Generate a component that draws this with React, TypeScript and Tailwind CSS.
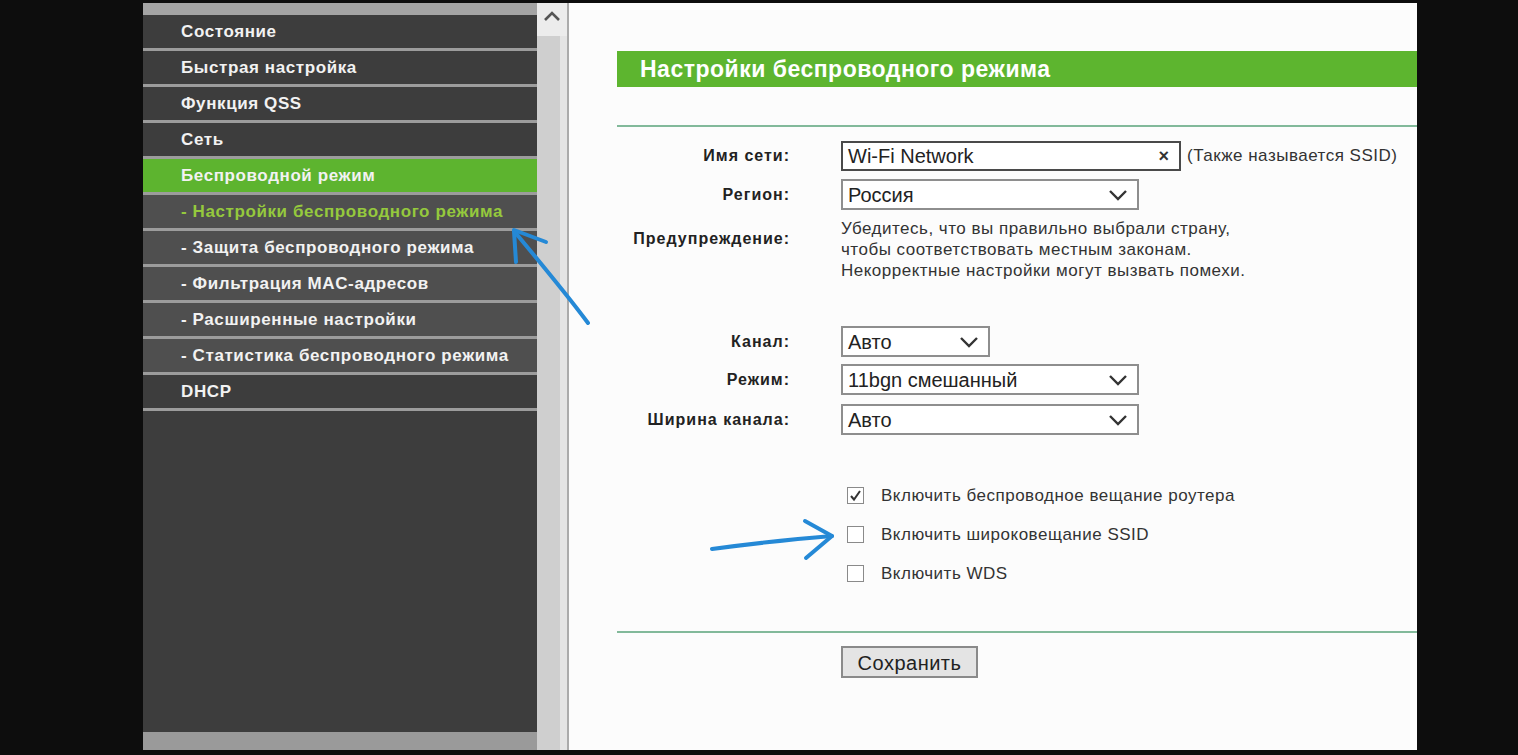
import React from "react";

const menu = [
  { label: "Состояние", kind: "main" },
  { label: "Быстрая настройка", kind: "main" },
  { label: "Функция QSS", kind: "main" },
  { label: "Сеть", kind: "main" },
  { label: "Беспроводной режим", kind: "active" },
  { label: "- Настройки беспроводного режима", kind: "subActive" },
  { label: "- Защита беспроводного режима", kind: "sub" },
  { label: "- Фильтрация MAC-адресов", kind: "sub" },
  { label: "- Расширенные настройки", kind: "sub" },
  { label: "- Статистика беспроводного режима", kind: "sub" },
  { label: "DHCP", kind: "main" },
];

function Chevron() {
  return (
    <svg width="20" height="12" viewBox="0 0 20 12" className="absolute right-[9px] top-1/2 -translate-y-1/2">
      <polyline points="2,2 10,10 18,2" fill="none" stroke="#333" strokeWidth="2.4" />
    </svg>
  );
}

function Select({ value, width }: { value: string; width: string }) {
  return (
    <div className={`relative h-[31px] ${width} border-2 border-[#8e8e8e] bg-white flex items-center pl-[5px] text-[20px] text-[#222]`}>
      <span>{value}</span>
      <Chevron />
    </div>
  );
}

function Checkbox({ checked }: { checked?: boolean }) {
  return (
    <div className="w-[17px] h-[17px] border border-[#8a8a8a] bg-white flex items-center justify-center">
      {checked && (
        <svg width="13" height="13" viewBox="0 0 13 13">
          <polyline points="2,7 5,10.5 11,2" fill="none" stroke="#333" strokeWidth="2" />
        </svg>
      )}
    </div>
  );
}

export default function App() {
  const label = "w-[173px] text-right font-bold text-[16px] tracking-[1px] text-[#222]";
  return (
    <div className="relative w-[1518px] h-[755px] overflow-hidden bg-[#0d0d0d] font-['Liberation_Sans',Arial,sans-serif]">
      <div className="flex pt-[3px] pl-[143px]">
        <div className="flex w-[1274px] h-[747px]">
          {/* Left menu */}
          <div className="w-[394px] flex flex-col bg-[#3d3d3d]">
            <div className="h-[12px] bg-[#a4a4a4]" />
            {menu.map((m, i) => {
              const bg =
                m.kind === "active" ? "bg-[#5db42f]" : m.kind === "main" ? "bg-[#3d3d3d]" : "bg-[#4f4f4f]";
              const color = m.kind === "subActive" ? "text-[#95c93d]" : "text-[#f2f2f2]";
              return (
                <div key={i} className={`h-[36px] border-b-[3px] border-[#9c9c9c] ${bg} flex items-center pl-[38px]`}>
                  <span className={`text-[17px] tracking-[0.6px] font-bold ${color}`}>{m.label}</span>
                </div>
              );
            })}
            <div className="flex-1" />
            <div className="h-[18px] bg-[#9a9a9a]" />
          </div>

          {/* Scrollbar */}
          <div className="w-[30px] flex flex-col">
            <div className="h-[33px] bg-[#ececec] flex items-start justify-center pt-[8px]">
              <svg width="18" height="11" viewBox="0 0 18 11">
                <polyline points="2,9 9,2 16,9" fill="none" stroke="#555" strokeWidth="2.6" />
              </svg>
            </div>
            <div className="flex-1 flex">
              <div className="w-[23px] bg-[#cfcfcf]" />
              <div className="flex-1 bg-[#e4e4e4]" />
            </div>
          </div>
          <div className="w-[2px] bg-[#ababab]" />

          {/* Content */}
          <div className="flex-1 bg-[#fcfcfc] pl-[48px] flex flex-col">
            <div className="mt-[48px] h-[36px] bg-[#5db52f] flex items-center pl-[23px]">
              <span className="text-white font-bold text-[23px] tracking-[0.5px]">Настройки беспроводного режима</span>
            </div>
            <div className="mt-[38px] h-[2px] bg-[#82b99a]" />

            <div className="mt-[14px] flex items-center h-[30px]">
              <div className={label}>Имя сети:</div>
              <div className="ml-[51px] w-[340px] h-[30px] border-2 border-[#4a4a4a] bg-white flex items-center justify-between pl-[5px] pr-[10px] text-[20px] text-[#222]">
                <span>Wi-Fi Network</span>
                <span className="text-[18px] font-bold text-[#333]">×</span>
              </div>
              <span className="ml-[6px] text-[17px] tracking-[0.5px] text-[#333]">(Также называется SSID)</span>
            </div>

            <div className="mt-[8px] flex items-center">
              <div className={label}>Регион:</div>
              <div className="ml-[51px]">
                <Select value="Россия" width="w-[298px]" />
              </div>
            </div>

            <div className="mt-[8px] flex items-start">
              <div className={`${label} pt-[10px] leading-[21px]`}>Предупреждение:</div>
              <div className="ml-[51px] text-[17px] tracking-[0.5px] leading-[21px] text-[#333]">
                <div>Убедитесь, что вы правильно выбрали страну,</div>
                <div>чтобы соответствовать местным законам.</div>
                <div>Некорректные настройки могут вызвать помехи.</div>
              </div>
            </div>

            <div className="mt-[45px] flex items-center">
              <div className={label}>Канал:</div>
              <div className="ml-[51px]">
                <Select value="Авто" width="w-[149px]" />
              </div>
            </div>
            <div className="mt-[7px] flex items-center">
              <div className={label}>Режим:</div>
              <div className="ml-[51px]">
                <Select value="11bgn смешанный" width="w-[298px]" />
              </div>
            </div>
            <div className="mt-[9px] flex items-center">
              <div className={label}>Ширина канала:</div>
              <div className="ml-[51px]">
                <Select value="Авто" width="w-[298px]" />
              </div>
            </div>

            <div className="mt-[41px] flex flex-col pl-[230px]">
              {[
                { t: "Включить беспроводное вещание роутера", c: true },
                { t: "Включить широковещание SSID", c: false },
                { t: "Включить WDS", c: false },
              ].map((r, i) => (
                <div key={i} className="h-[39px] flex items-center gap-[17px]">
                  <Checkbox checked={r.c} />
                  <span className="text-[17px] tracking-[0.5px] text-[#333]">{r.t}</span>
                </div>
              ))}
            </div>

            <div className="mt-[38px] h-[2px] bg-[#82b99a]" />

            <div className="mt-[13px] pl-[224px]">
              <button className="w-[137px] h-[32px] bg-[#e4e4e4] border-2 border-[#8a8a8a] text-[20px] tracking-[0.5px] text-[#222]">
                Сохранить
              </button>
            </div>
          </div>
        </div>
      </div>

      {/* Hand-drawn annotation arrows */}
      <svg className="absolute inset-0 pointer-events-none" width="1518" height="755">
        <g fill="none" stroke="#2589d6" strokeWidth="4" strokeLinecap="round" strokeLinejoin="round">
          <path d="M588 323 C 565 292, 538 260, 514 231" />
          <path d="M514 230 L 546 242" />
          <path d="M514 231 L 516 262" />
          <path d="M712 549 C 750 544, 795 539, 832 536" />
          <path d="M805 521 L 832 536 L 806 558" />
        </g>
      </svg>
    </div>
  );
}
